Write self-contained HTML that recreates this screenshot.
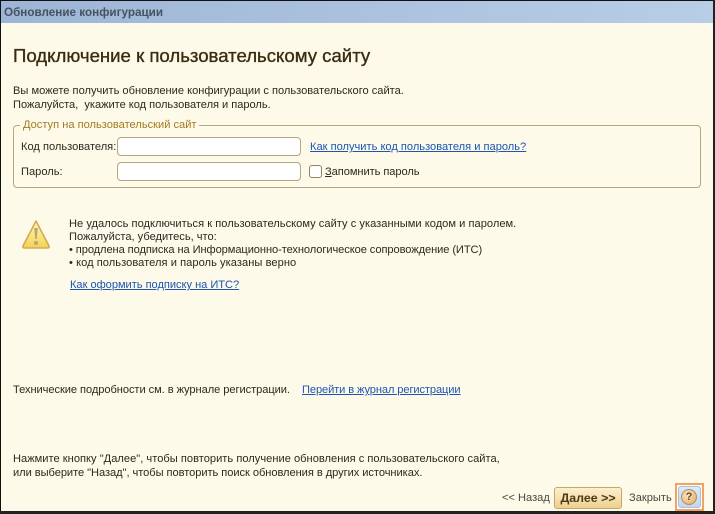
<!DOCTYPE html>
<html><head><meta charset="utf-8"><style>
html,body{margin:0;padding:0;width:715px;height:514px;overflow:hidden;background:#fff}
*{box-sizing:border-box}
#w{position:relative;width:715px;height:514px;background:#fdfaea;font:11.1px/14px "Liberation Sans",sans-serif;color:#2a2a20;overflow:hidden}
.t{position:absolute;white-space:nowrap}
a{color:#1c55b5;text-decoration:underline}
.inp{position:absolute;background:#fff;border:1px solid #b4a67e;border-radius:4px;left:117px;width:184px;height:19px}
</style></head><body><div id="w">
<div style="position:absolute;left:0;top:1px;width:713px;height:22px;background:linear-gradient(90deg,#9db5d6,#b8cde6)"></div>
<div style="position:absolute;left:0;top:0;width:715px;height:1px;background:#111"></div>
<div style="position:absolute;left:0;top:0;width:1px;height:514px;background:#111"></div>
<div style="position:absolute;left:713px;top:0;width:2px;height:514px;background:#222"></div>
<div style="position:absolute;left:0;top:511px;width:715px;height:3px;background:#222"></div>
<div class="t" style="left:4px;top:6px;font-weight:bold;font-size:11.7px;color:#45525f">Обновление конфигурации</div>
<div class="t" style="left:13px;top:46px;font-size:18.6px;line-height:20px;color:#3a2c10;-webkit-text-stroke:.35px #3a2c10">Подключение к пользовательскому сайту</div>
<div class="t" style="left:13px;top:84px">Вы можете получить обновление конфигурации с пользовательского сайта.</div>
<div class="t" style="left:13px;top:98px;letter-spacing:-.03px">Пожалуйста,&nbsp; укажите код пользователя и пароль.</div>

<div style="position:absolute;left:13px;top:125px;width:688px;height:63px;border:1px solid #b4a67e;border-radius:4px"></div>
<div class="t" style="left:20px;top:119px;background:#fdfaea;padding:0 3px;color:#a47a20;line-height:13px">Доступ на пользовательский сайт</div>
<div class="t" style="left:21px;top:140px">Код пользователя:</div>
<div class="inp" style="top:137px"></div>
<a class="t" style="left:310px;top:140px">Как получить код пользователя и пароль?</a>
<div class="t" style="left:21px;top:165px">Пароль:</div>
<div class="inp" style="top:162px"></div>
<div style="position:absolute;left:309px;top:165px;width:13px;height:13px;background:#fff;border:1px solid #8f8464;border-radius:3px"></div>
<div class="t" style="left:325px;top:165px;letter-spacing:-.06px"><u>З</u>апомнить пароль</div>

<svg style="position:absolute;left:21px;top:219px" width="30" height="31" viewBox="0 0 30 31">
<defs><linearGradient id="g" x1="0" y1="0" x2="0" y2="1"><stop offset="0" stop-color="#fdf6c8"/><stop offset=".6" stop-color="#f9e27a"/><stop offset="1" stop-color="#f3d05a"/></linearGradient></defs>
<path d="M15 2 L28 27 Q28.5 29 26.5 29 H3.5 Q1.5 29 2 27 Z" fill="url(#g)" stroke="#d3ab4c" stroke-width="1.6" stroke-linejoin="round"/>
<path d="M13.2 9 H16.8 L15.8 20 H14.2 Z" fill="#b8a878"/><circle cx="15" cy="24" r="2" fill="#b8a878"/></svg>

<div class="t" style="left:69px;top:217px;letter-spacing:.025px">Не удалось подключиться к пользовательскому сайту с указанными кодом и паролем.</div>
<div class="t" style="left:69px;top:230px">Пожалуйста, убедитесь, что:</div>
<div class="t" style="left:69px;top:243px;letter-spacing:-.08px">• продлена подписка на Информационно-технологическое сопровождение (ИТС)</div>
<div class="t" style="left:69px;top:256px;letter-spacing:.05px">• код пользователя и пароль указаны верно</div>
<a class="t" style="left:70px;top:278px;letter-spacing:-.03px">Как оформить подписку на ИТС?</a>

<div class="t" style="left:13px;top:383px;letter-spacing:-.06px">Технические подробности см. в журнале регистрации.</div>
<a class="t" style="left:302px;top:383px;letter-spacing:-.1px">Перейти в журнал регистрации</a>

<div class="t" style="left:13px;top:452px;letter-spacing:.02px">Нажмите кнопку "Далее", чтобы повторить получение обновления с пользовательского сайта,</div>
<div class="t" style="left:13px;top:466px;letter-spacing:-.05px">или выберите "Назад", чтобы повторить поиск обновления в других источниках.</div>

<div class="t" style="left:502px;top:491px;color:#4a4a3a">&lt;&lt; Назад</div>
<div class="t" style="left:554px;top:487px;width:68px;height:22px;border:1px solid #c8a868;border-radius:3px;background:linear-gradient(#fcf0cf,#efd08f);font-weight:bold;font-size:12.4px;text-align:center;line-height:20px;color:#4d3a17">Далее &gt;&gt;</div>
<div class="t" style="left:629px;top:491px;color:#4a4a3a">Закрыть</div>
<div style="position:absolute;left:675px;top:483px;width:29px;height:28px;border:2px solid #f5a260;background:#fff"></div>
<div style="position:absolute;left:678px;top:486px;width:23px;height:22px;border:1px solid #a9c0e0;border-radius:3px;background:linear-gradient(#dfeafa,#c3d6f2)"></div>
<div style="position:absolute;left:681px;top:489px;width:16px;height:16px;border-radius:50%;background:radial-gradient(circle at 40% 35%,#fbe6c4,#e0a862);border:1px solid #b98d55;text-align:center;font:bold 11px/14px 'Liberation Sans',sans-serif;color:#6a4a20">?</div>
</div></body></html>
